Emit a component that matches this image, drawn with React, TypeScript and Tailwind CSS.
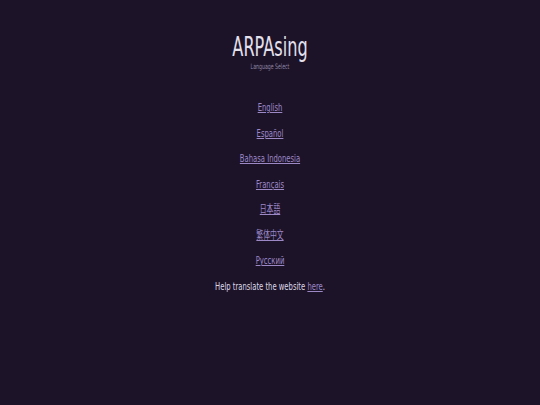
import React from "react";

const languages = [
	"English",
	"Español",
	"Bahasa Indonesia",
	"Français",
	"日本語",
	"繁体中文",
	"Русский",
];

const font = {
	fontFamily: '"DejaVu Sans", "Noto Sans CJK JP", sans-serif',
};

const App = () => {
	return (
		<div
			className="min-h-[405px] w-full bg-[#1c1329] text-[#ddd8e6]"
			style={font}
		>
			<div className="flex flex-col items-center pt-[32px] scale-x-[0.62] origin-top">
				<h1 className="text-[26px] leading-[30px] font-normal text-[#e4e0ec]">
					ARPAsing
				</h1>
				<p className="text-[7.5px] leading-[10px] text-[#8f86a3]">
					Language Select
				</p>
				<ul className="mt-[29px] flex flex-col items-center gap-[11.5px]">
					{languages.map((lang) => (
						<li key={lang} className="text-[11px] leading-[14px]">
							<a href="#" className="text-[#9d88c6] underline">
								{lang}
							</a>
						</li>
					))}
					<li className="text-[11px] leading-[14px]">
						Help translate the website{" "}
						<a href="#" className="text-[#9d88c6] underline">
							here
						</a>
						.
					</li>
				</ul>
			</div>
		</div>
	);
};

export default App;
